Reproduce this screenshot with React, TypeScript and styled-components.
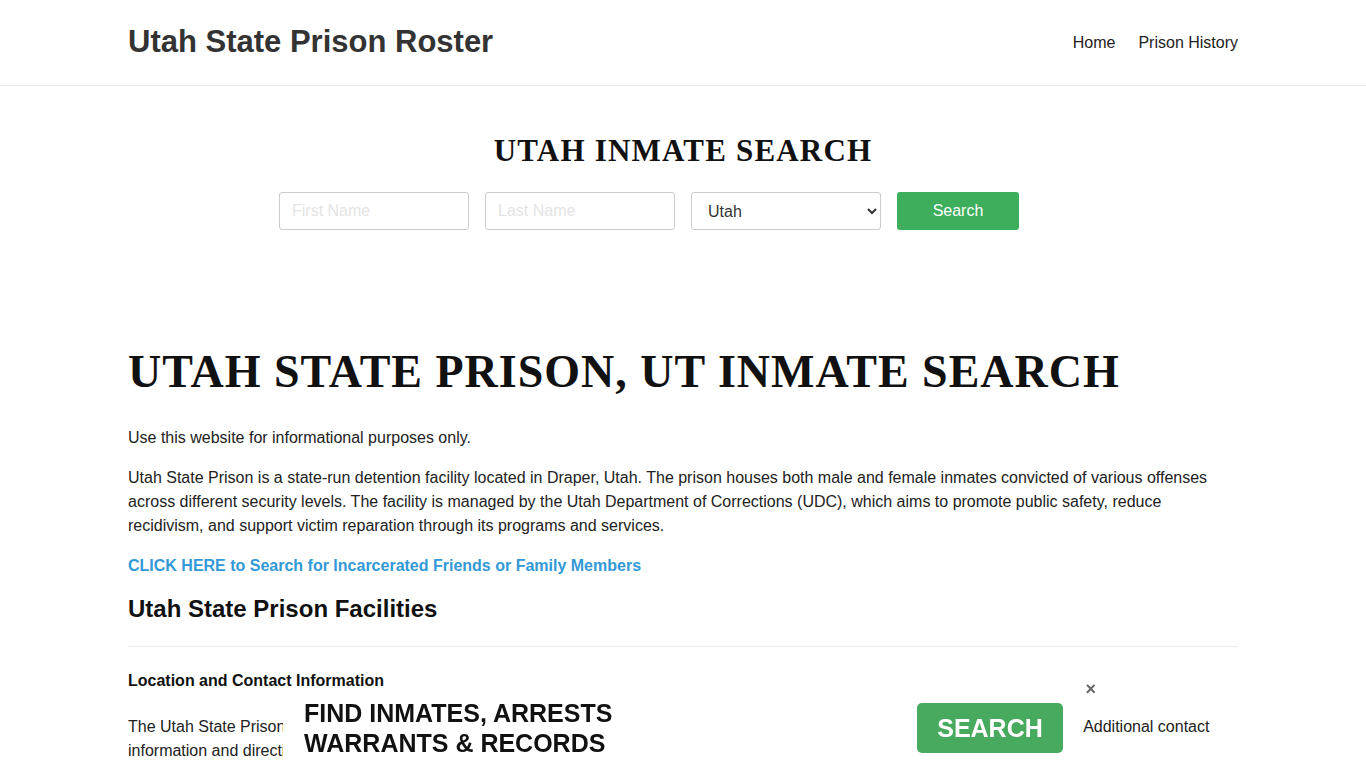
import React from "react";
import styled, { createGlobalStyle } from "styled-components";

const Global = createGlobalStyle`
  html, body { margin: 0; padding: 0; background: #fff; }
  body { font-family: "Liberation Sans", Arial, sans-serif; color: #222; overflow: hidden; }
  * { box-sizing: border-box; }
`;

const Header = styled.header`
  height: 86px;
  border-bottom: 1px solid #f0f0f0;
`;

const Container = styled.div`
  width: 1110px;
  margin: 0 auto;
`;

const HeaderInner = styled(Container)`
  height: 85px;
  display: flex;
  align-items: center;
  justify-content: space-between;
`;

const Brand = styled.a`
  font-size: 31px;
  font-weight: 700;
  color: #333;
  text-decoration: none;
  padding-bottom: 1px;
`;

const Nav = styled.nav`
  display: flex;
  gap: 23px;
`;

const NavLink = styled.a`
  font-size: 16px;
  color: #222;
  text-decoration: none;
`;

const SearchSection = styled.section`
  padding-top: 47px;
  text-align: center;
`;

const SearchTitle = styled.h2`
  margin: 0;
  font-family: "Liberation Serif", "Times New Roman", serif;
  font-weight: 700;
  font-size: 31px;
  letter-spacing: 1.2px;
  line-height: 36px;
  color: #111;
`;

const Form = styled.form`
  margin: 23px 0 0 151px;
  display: flex;
  gap: 16px;
`;

const Field = styled.input`
  width: 190px;
  height: 38px;
  border: 1px solid #ccc;
  border-radius: 3px;
  padding: 0 12px;
  font-family: "Liberation Sans", Arial, sans-serif;
  font-size: 16px;
  color: #333;
  &::placeholder { color: #e4e4e4; }
`;

const Select = styled.select`
  width: 190px;
  height: 38px;
  border: 1px solid #ccc;
  border-radius: 3px;
  padding: 0 12px;
  font-family: "Liberation Sans", Arial, sans-serif;
  font-size: 16px;
  color: #333;
  background: #fff;
`;

const Button = styled.button`
  width: 122px;
  height: 38px;
  border: none;
  border-radius: 3px;
  background: #3dae5c;
  color: #fff;
  font-family: "Liberation Sans", Arial, sans-serif;
  font-size: 16px;
`;

const Main = styled(Container)`
  padding-top: 115px;
`;

const Title = styled.h1`
  margin: 0;
  font-family: "Liberation Serif", "Times New Roman", serif;
  font-weight: 700;
  font-size: 46px;
  letter-spacing: 1px;
  line-height: 54px;
  color: #111;
`;

const P = styled.p`
  margin: 0 0 16px;
  font-size: 16px;
  line-height: 24px;
  color: #222;
`;

const Intro = styled(P)`
  margin-top: 27px;
`;

const Link = styled.a`
  display: block;
  font-size: 16px;
  line-height: 24px;
  font-weight: 700;
  color: #3399d6;
  text-decoration: none;
  margin-bottom: 16px;
`;

const H3 = styled.h3`
  margin: 0;
  font-size: 24px;
  line-height: 30px;
  font-weight: 700;
  color: #111;
`;

const Rule = styled.hr`
  border: none;
  border-top: 1px solid #eee;
  margin: 22px 0 22px;
`;

const H4 = styled.h4`
  margin: 0 0 22px;
  font-size: 16px;
  line-height: 24px;
  font-weight: 700;
  color: #111;
`;

const Banner = styled.div`
  position: fixed;
  left: 283px;
  bottom: 0;
  width: 792px;
  height: 80px;
  background: #fff;
  display: flex;
  align-items: center;
  justify-content: space-between;
  padding: 0 12px 0 21px;
`;

const BannerText = styled.div`
  font-size: 25px;
  line-height: 30px;
  font-weight: 700;
  color: #111;
`;

const BannerButton = styled.button`
  width: 146px;
  height: 50px;
  border: none;
  border-radius: 5px;
  background: #48aa5f;
  color: #fff;
  font-family: "Liberation Sans", Arial, sans-serif;
  font-size: 25px;
  font-weight: 700;
`;

const Close = styled.span`
  position: absolute;
  right: -21px;
  top: -8px;
  font-size: 18px;
  font-weight: 700;
  color: #666;
  line-height: 1;
`;

export default function App() {
  return (
    <>
      <Global />
      <Header>
        <HeaderInner>
          <Brand href="#">Utah State Prison Roster</Brand>
          <Nav>
            <NavLink href="#">Home</NavLink>
            <NavLink href="#">Prison History</NavLink>
          </Nav>
        </HeaderInner>
      </Header>
      <SearchSection>
        <Container>
          <SearchTitle>UTAH INMATE SEARCH</SearchTitle>
          <Form onSubmit={(e) => e.preventDefault()}>
            <Field placeholder="First Name" />
            <Field placeholder="Last Name" />
            <Select defaultValue="Utah">
              <option>Utah</option>
            </Select>
            <Button type="submit">Search</Button>
          </Form>
        </Container>
      </SearchSection>
      <Main>
        <Title>UTAH STATE PRISON, UT INMATE SEARCH</Title>
        <Intro>Use this website for informational purposes only.</Intro>
        <P>
          Utah State Prison is a state-run detention facility located in Draper, Utah. The prison houses both male and female inmates convicted of various offenses across different security levels. The facility is managed by the Utah Department of Corrections (UDC), which aims to promote public safety, reduce recidivism, and support victim reparation through its programs and services.
        </P>
        <Link href="#">CLICK HERE to Search for Incarcerated Friends or Family Members</Link>
        <H3>Utah State Prison Facilities</H3>
        <Rule />
        <H4>Location and Contact Information</H4>
        <P>
          {"The Utah State Prison mailing address, main phone number and visiting hours are listed right below for families, attorneys and visitors\u00a0 Additional contact information and directions to the facility can be found on the official department website."}
        </P>
      </Main>
      <Banner>
        <BannerText>
          FIND INMATES, ARRESTS
          <br />
          WARRANTS &amp; RECORDS
        </BannerText>
        <BannerButton>SEARCH</BannerButton>
        <Close>×</Close>
      </Banner>
    </>
  );
}
